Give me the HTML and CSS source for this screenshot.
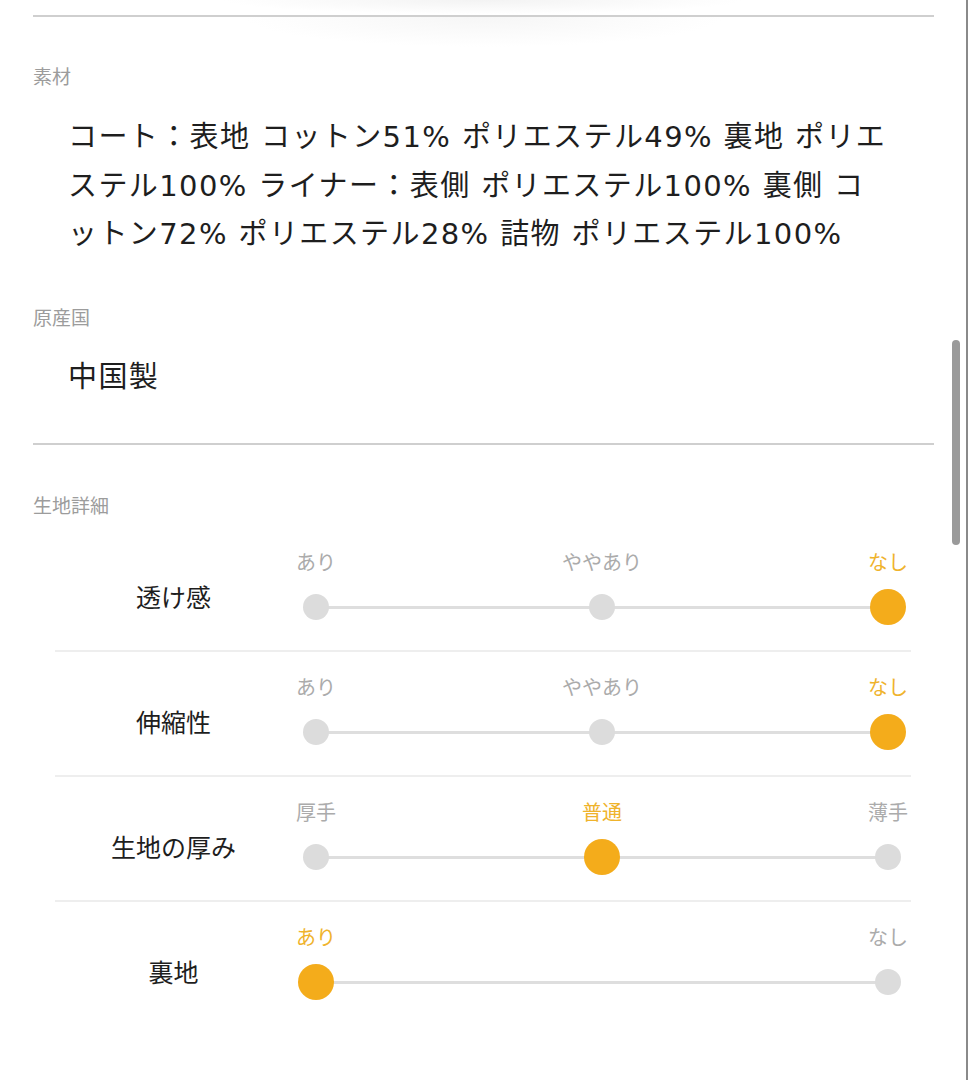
FILE: index.html
```html
<!DOCTYPE html>
<html lang="ja">
<head>
<meta charset="utf-8">
<title>商品詳細</title>
<link rel="stylesheet" href="styles.css">
</head>
<body>
<div class="page">
  <div class="top-shade"></div>
  <section class="section first">
    <h3 class="label">素材</h3>
    <p class="value">コート：表地 コットン51% ポリエステル49% 裏地 ポリエステル100% ライナー：表側 ポリエステル100% 裏側 コットン72% ポリエステル28% 詰物 ポリエステル100%</p>
    <h3 class="label gap">原産国</h3>
    <p class="value origin">中国製</p>
  </section>
  <section class="section details">
    <h3 class="label">生地詳細</h3>
    <div class="rows">
      <div class="row">
        <div class="row-name">透け感</div>
        <div class="slider">
          <div class="opt"><span class="opt-label">あり</span><span class="dot-slot"><span class="dot"></span></span></div>
          <div class="opt"><span class="opt-label">ややあり</span><span class="dot-slot"><span class="dot"></span></span></div>
          <div class="opt on"><span class="opt-label">なし</span><span class="dot-slot"><span class="dot"></span></span></div>
        </div>
      </div>
      <div class="row">
        <div class="row-name">伸縮性</div>
        <div class="slider">
          <div class="opt"><span class="opt-label">あり</span><span class="dot-slot"><span class="dot"></span></span></div>
          <div class="opt"><span class="opt-label">ややあり</span><span class="dot-slot"><span class="dot"></span></span></div>
          <div class="opt on"><span class="opt-label">なし</span><span class="dot-slot"><span class="dot"></span></span></div>
        </div>
      </div>
      <div class="row">
        <div class="row-name">生地の厚み</div>
        <div class="slider">
          <div class="opt"><span class="opt-label">厚手</span><span class="dot-slot"><span class="dot"></span></span></div>
          <div class="opt on"><span class="opt-label">普通</span><span class="dot-slot"><span class="dot"></span></span></div>
          <div class="opt"><span class="opt-label">薄手</span><span class="dot-slot"><span class="dot"></span></span></div>
        </div>
      </div>
      <div class="row last">
        <div class="row-name">裏地</div>
        <div class="slider">
          <div class="opt on"><span class="opt-label">あり</span><span class="dot-slot"><span class="dot"></span></span></div>
          <div class="opt"><span class="opt-label">なし</span><span class="dot-slot"><span class="dot"></span></span></div>
        </div>
      </div>
    </div>
  </section>
</div>
<div class="scrollbar"></div>
<div class="edge"></div>
</body>
</html>
```
FILE: styles.css
```css
html, body {
  margin: 0;
  padding: 0;
  background: #fff;
}
body {
  font-family: "Noto Sans CJK JP", "Noto Sans", sans-serif;
  color: #222;
  width: 968px;
  height: 1080px;
  overflow: hidden;
  position: relative;
}
.page {
  padding: 0 34px 0 33px;
}
.top-shade {
  height: 15px;
  border-bottom: 2px solid #cfcfcf;
  background: radial-gradient(ellipse 260px 14px at 50% 0, #f3f3f3, rgba(255,255,255,0));
}
.section {
  padding: 44px 0 42px;
  border-bottom: 2px solid #cfcfcf;
}
.section.first {
  background: radial-gradient(ellipse 240px 30px at 50% 0, #f6f6f6, rgba(255,255,255,0));
}
.label {
  margin: 0;
  font-size: 19px;
  font-weight: 400;
  line-height: 30px;
  color: #9c9c9c;
}
.label.gap {
  margin-top: 43px;
}
.value {
  margin: 22px 0 0;
  padding: 0 0 0 35px;
  width: 822px;
  font-family: "DejaVu Sans", "Noto Sans CJK JP", sans-serif;
  font-size: 29px;
  letter-spacing: 1.4px;
  line-height: 48.5px;
  color: #1e1e1e;
  line-break: loose;
}
.value.origin {
  margin-top: 21px;
}
.section.details {
  padding: 45px 0 0;
  border-bottom: none;
}
.rows {
  margin: 7px 23px 0 22px;
}
.row {
  display: grid;
  grid-template-columns: 239px 1fr;
  padding: 21px 0 25px;
  border-bottom: 2px solid #eeeeee;
}
.row.last {
  border-bottom: none;
}
.row-name {
  font-size: 25px;
  line-height: 36px;
  margin-top: 30px;
  text-align: center;
  padding-right: 2px;
  color: #1e1e1e;
}
.slider {
  position: relative;
  display: flex;
  justify-content: space-between;
  width: 616px;
}
.slider::before {
  content: "";
  position: absolute;
  left: 22px;
  right: 22px;
  top: 58px;
  height: 3px;
  background: #dedede;
}
.opt {
  position: relative;
  width: 44px;
  display: flex;
  flex-direction: column;
  align-items: center;
}
.opt-label {
  display: flex;
  justify-content: center;
  width: 44px;
  white-space: nowrap;
  font-size: 20px;
  line-height: 28px;
  color: #ababab;
  margin-bottom: 13px;
}
.dot-slot {
  display: flex;
  align-items: center;
  justify-content: center;
  width: 44px;
  height: 36px;
}
.dot {
  width: 26px;
  height: 26px;
  border-radius: 50%;
  background: #dcdcdc;
}
.opt.on .opt-label {
  color: #efb32c;
}
.opt.on .dot {
  width: 36px;
  height: 36px;
  background: #f4ac1b;
}
.scrollbar {
  position: absolute;
  left: 952px;
  top: 340px;
  width: 8px;
  height: 205px;
  border-radius: 4px;
  background: #9a9a9a;
}
.edge {
  position: absolute;
  right: 0;
  top: 0;
  width: 2px;
  height: 1080px;
  background: #8a8a8a;
}
```
